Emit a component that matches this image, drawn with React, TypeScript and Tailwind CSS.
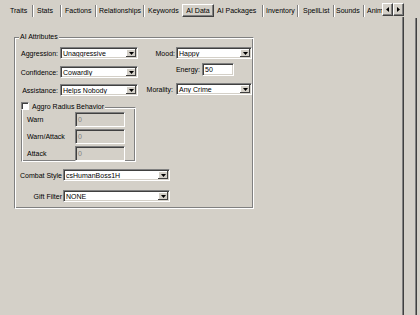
import React from "react";

function Sep() {
  return <div className="w-[2px] h-[12px] mt-[1px] border-l border-l-[#808080] border-r border-r-white" />;
}

function Tab({ w, pl, label }: { w: string; pl: string; label: string }) {
  return (
    <div className={`${w} ${pl} h-[13px] flex items-center overflow-hidden whitespace-nowrap`}>{label}</div>
  );
}

function Arrow({ dir }: { dir: "down" | "left" | "right" }) {
  if (dir === "down")
    return (
      <svg width="5" height="3" viewBox="0 0 5 3">
        <polygon points="0,0 5,0 2.5,3" fill="#000" />
      </svg>
    );
  if (dir === "left")
    return (
      <svg width="3" height="5" viewBox="0 0 3 5">
        <polygon points="3,0 3,5 0,2.5" fill="#000" />
      </svg>
    );
  return (
    <svg width="3" height="5" viewBox="0 0 3 5">
      <polygon points="0,0 0,5 3,2.5" fill="#000" />
    </svg>
  );
}

function Combo({ w, text }: { w: string; text: string }) {
  return (
    <div
      className={`${w} h-[12px] flex bg-white border border-t-[#808080] border-l-[#808080] border-b-white border-r-white p-[1px] shadow-[inset_1px_1px_0_#404040,inset_-1px_-1px_0_#d4d0c8]`}
    >
      <div className="flex-1 flex items-center pl-[1px] whitespace-nowrap overflow-hidden">{text}</div>
      <div className="w-[10px] h-full bg-[#d4d0c8] flex items-center justify-center shadow-[inset_-1px_-1px_0_#404040,inset_1px_1px_0_#fff]">
        <Arrow dir="down" />
      </div>
    </div>
  );
}

function Input({ w, h, text, disabled }: { w: string; h: string; text: string; disabled?: boolean }) {
  return (
    <div
      className={`${w} ${h} flex items-center pl-[2px] border border-t-[#808080] border-l-[#808080] border-b-white border-r-white shadow-[inset_1px_1px_0_#404040,inset_-1px_-1px_0_#d4d0c8] ${
        disabled ? "bg-[#d4d0c8] text-[#808080]" : "bg-white text-black"
      }`}
    >
      {text}
    </div>
  );
}

function AggroRow({ label, mt }: { label: string; mt: string }) {
  return (
    <div className={`flex items-center h-[15px] ${mt}`}>
      <div className="w-[53px] pl-[5px]">{label}</div>
      <Input w="w-[50px]" h="h-[15px]" text="0" disabled />
    </div>
  );
}

export default function App() {
  return (
    <div className="w-[420px] h-[315px] bg-[#d4d0c8] flex overflow-hidden font-['Liberation_Sans',Arial,sans-serif] text-[7px] leading-[7px] text-black">
      <div className="w-[404px] flex flex-col">
        {/* Tab strip */}
        <div className="h-[17px] flex items-start pt-[4px]">
          <Tab w="w-[32px]" pl="pl-[10px]" label="Traits" />
          <Sep />
          <Tab w="w-[26px]" pl="pl-[3px]" label="Stats" />
          <Sep />
          <Tab w="w-[33px]" pl="pl-[3px]" label="Factions" />
          <Sep />
          <Tab w="w-[46px]" pl="pl-[2px]" label="Relationships" />
          <Sep />
          <Tab w="w-[37px]" pl="pl-[3px]" label="Keywords" />
          <div className="w-[32px] h-[13px] flex items-center justify-center border border-t-white border-l-white border-b-[#404040] border-r-[#404040] shadow-[inset_-1px_-1px_0_#808080]">
            AI Data
          </div>
          <Tab w="w-[48px]" pl="pl-[3px]" label="AI Packages" />
          <Sep />
          <Tab w="w-[33px]" pl="pl-[2px]" label="Inventory" />
          <Sep />
          <Tab w="w-[34px]" pl="pl-[4px]" label="SpellList" />
          <Sep />
          <Tab w="w-[28px]" pl="pl-[1px]" label="Sounds" />
          <Sep />
          <Tab w="w-[17px]" pl="pl-[2px]" label="Animations" />
          <div className="w-[11px] h-[13px] -mt-[1px] flex items-center justify-center bg-[#d4d0c8] border border-t-white border-l-white border-b-[#404040] border-r-[#404040] shadow-[inset_-1px_-1px_0_#808080]">
            <Arrow dir="left" />
          </div>
          <div className="w-[11px] h-[13px] -mt-[1px] flex items-center justify-center bg-[#d4d0c8] border border-t-white border-l-white border-b-[#404040] border-r-[#404040] shadow-[inset_-1px_-1px_0_#808080]">
            <Arrow dir="right" />
          </div>
        </div>

        {/* Panel */}
        <div className="flex-1 border-r border-r-[#404040] shadow-[inset_-1px_0_0_#808080] pl-[14px] pt-[20px]">
          <div className="relative w-[240px] h-[172px] border border-t-[#808080] border-l-[#808080] border-b-white border-r-white shadow-[inset_1px_1px_0_#fff,inset_-1px_-1px_0_#808080] pt-[9px]">
            <span className="absolute left-[4px] top-[-5px] px-[1px] bg-[#d4d0c8]">AI Attributes</span>

            {/* top section */}
            <div className="flex">
              <div className="w-[123px] flex flex-col">
                <div className="flex items-center h-[12px]">
                  <div className="w-[43px] text-right">Aggression:</div>
                  <div className="ml-[2px]">
                    <Combo w="w-[78px]" text="Unaggressive" />
                  </div>
                </div>
                <div className="flex items-center h-[12px] mt-[7px]">
                  <div className="w-[43px] text-right">Confidence:</div>
                  <div className="ml-[2px]">
                    <Combo w="w-[78px]" text="Cowardly" />
                  </div>
                </div>
                <div className="flex items-center h-[12px] mt-[6px]">
                  <div className="w-[43px] text-right">Assistance:</div>
                  <div className="ml-[2px]">
                    <Combo w="w-[78px]" text="Helps Nobody" />
                  </div>
                </div>
              </div>
              <div className="ml-[2px] flex flex-col">
                <div className="flex items-center h-[12px]">
                  <div className="w-[35px] text-right">Mood:</div>
                  <div className="ml-[1px]">
                    <Combo w="w-[76px]" text="Happy" />
                  </div>
                </div>
                <div className="flex items-center h-[13px] mt-[4px]">
                  <div className="w-[60px] text-right">Energy:</div>
                  <div className="ml-[2px]">
                    <Input w="w-[32px]" h="h-[13px]" text="50" />
                  </div>
                </div>
                <div className="flex items-center h-[12px] mt-[7px]">
                  <div className="w-[33px] text-right">Morality:</div>
                  <div className="ml-[3px]">
                    <Combo w="w-[76px]" text="Any Crime" />
                  </div>
                </div>
              </div>
            </div>

            {/* Aggro radius group */}
            <div className="relative ml-[6px] mt-[11px] w-[115px] border border-t-[#808080] border-l-[#808080] border-b-white border-r-white shadow-[inset_1px_1px_0_#fff,inset_-1px_-1px_0_#808080] pt-[4px] pb-[0px]">
              <div className="absolute left-[-1px] top-[-6px] flex items-center bg-[#d4d0c8] pr-[1px]">
                <div className="w-[8px] h-[8px] bg-white border border-t-[#808080] border-l-[#808080] border-b-white border-r-white shadow-[inset_1px_1px_0_#404040]" />
                <span className="ml-[3px]">Aggro Radius Behavior</span>
              </div>
              <AggroRow label="Warn" mt="mt-0" />
              <AggroRow label="Warn/Attack" mt="mt-[2px]" />
              <AggroRow label="Attack" mt="mt-[2px]" />
            </div>

            <div className="flex items-center h-[12px] mt-[7px]">
              <div className="w-[47px] text-right">Combat Style</div>
              <div className="ml-[1px]">
                <Combo w="w-[107px]" text="csHumanBoss1H" />
              </div>
            </div>
            <div className="flex items-center h-[12px] mt-[9px]">
              <div className="w-[47px] text-right">Gift Filter</div>
              <div className="ml-[1px]">
                <Combo w="w-[107px]" text="NONE" />
              </div>
            </div>
          </div>
        </div>
      </div>
      <div className="flex-1 flex pl-[11px] pt-[18px]">
        <div className="w-[2px] h-full border-l border-l-[#808080] bg-[#404040]" />
      </div>
    </div>
  );
}
